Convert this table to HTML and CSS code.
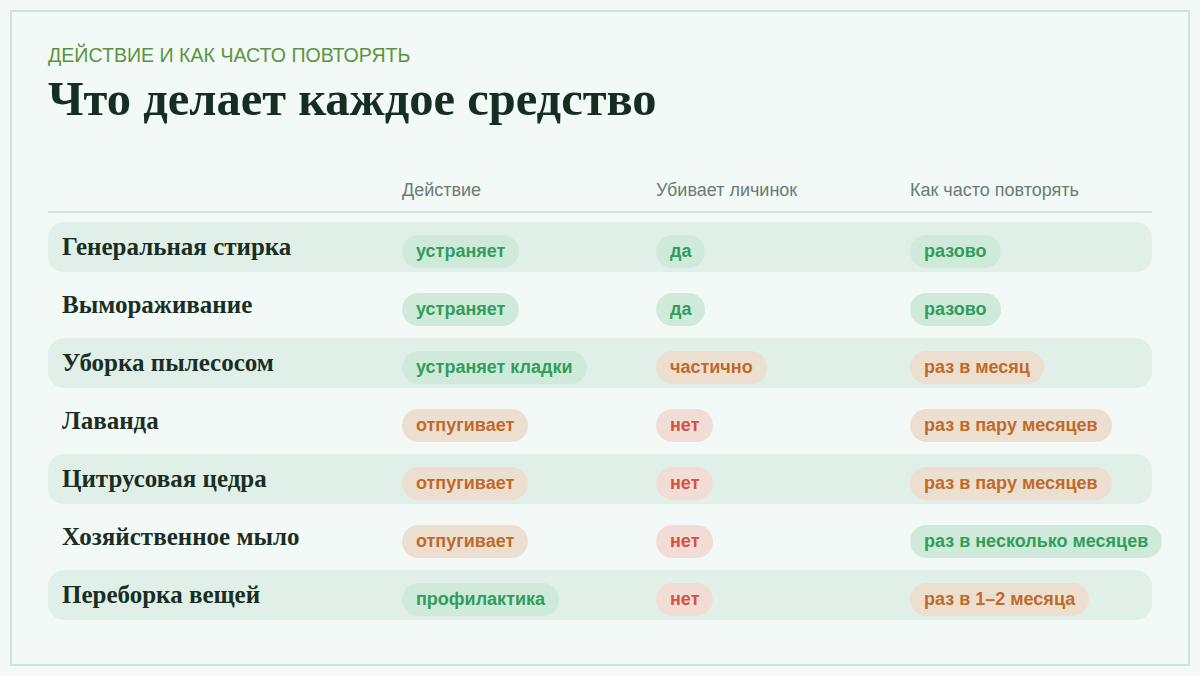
FILE: index.html
```html
<!DOCTYPE html>
<html lang="ru">
<head>
<meta charset="utf-8">
<link rel="stylesheet" href="styles.css">
</head>
<body>
<div class="frame">
  <div class="eyebrow">ДЕЙСТВИЕ И КАК ЧАСТО ПОВТОРЯТЬ</div>
  <h1 class="title">Что делает каждое средство</h1>
  <div class="table">
    <div class="row head">
      <div></div>
      <div class="th">Действие</div>
      <div class="th">Убивает личинок</div>
      <div class="th">Как часто повторять</div>
    </div>
    <div class="row alt">
      <div class="name">Генеральная стирка</div>
      <div><span class="pill g">устраняет</span></div>
      <div><span class="pill g">да</span></div>
      <div><span class="pill g">разово</span></div>
    </div>
    <div class="row">
      <div class="name">Вымораживание</div>
      <div><span class="pill g">устраняет</span></div>
      <div><span class="pill g">да</span></div>
      <div><span class="pill g">разово</span></div>
    </div>
    <div class="row alt">
      <div class="name">Уборка пылесосом</div>
      <div><span class="pill g">устраняет кладки</span></div>
      <div><span class="pill o">частично</span></div>
      <div><span class="pill o">раз в месяц</span></div>
    </div>
    <div class="row">
      <div class="name">Лаванда</div>
      <div><span class="pill o">отпугивает</span></div>
      <div><span class="pill r">нет</span></div>
      <div><span class="pill o">раз в пару месяцев</span></div>
    </div>
    <div class="row alt">
      <div class="name">Цитрусовая цедра</div>
      <div><span class="pill o">отпугивает</span></div>
      <div><span class="pill r">нет</span></div>
      <div><span class="pill o">раз в пару месяцев</span></div>
    </div>
    <div class="row">
      <div class="name">Хозяйственное мыло</div>
      <div><span class="pill o">отпугивает</span></div>
      <div><span class="pill r">нет</span></div>
      <div><span class="pill g">раз в несколько месяцев</span></div>
    </div>
    <div class="row alt">
      <div class="name">Переборка вещей</div>
      <div><span class="pill g">профилактика</span></div>
      <div><span class="pill r">нет</span></div>
      <div><span class="pill o">раз в 1–2 месяца</span></div>
    </div>
  </div>
</div>
</body>
</html>
```

FILE: styles.css
```css
* { box-sizing: border-box; }
html, body { margin: 0; padding: 0; }
body {
  background: #f2f9f6;
  padding: 10px;
  width: 1200px;
  height: 676px;
  font-family: "Liberation Sans", Arial, sans-serif;
}
.frame {
  border: 2px solid #cfe5dc;
  height: 656px;
  padding: 31px 36px 0 36px;
}
.eyebrow {
  color: #5a9442;
  font-size: 19.6px;
  line-height: 24px;
}
.title {
  margin: 4px 0 0 0;
  font-family: "Liberation Serif", "Times New Roman", serif;
  font-weight: 700;
  font-size: 48.5px;
  line-height: 56px;
  color: #142e22;
}
.table {
  margin-top: 52px;
  display: flex;
  flex-direction: column;
  gap: 8px;
}
.row {
  display: grid;
  grid-template-columns: 340px 254px 254px 1fr;
  align-items: center;
  height: 50px;
  padding-left: 14px;
  border-radius: 16px;
}
.row.head {
  height: auto;
  padding-bottom: 10px;
  border-bottom: 2px solid #cfe5dc;
  border-radius: 0;
  margin-bottom: 1px;
}
.th {
  color: #6a7c74;
  font-size: 18px;
  line-height: 22px;
}
.row.alt { background: #e0f0e8; }
.name {
  font-family: "Liberation Serif", "Times New Roman", serif;
  font-weight: 700;
  font-size: 25px;
  color: #1a2e24;
}
.pill {
  display: inline-block;
  white-space: nowrap;
  height: 33px;
  line-height: 33px;
  padding: 0 14px;
  border-radius: 17px;
  font-weight: 700;
  font-size: 18px;
  margin-top: 8px;
}
.pill.g { background: #cfeadb; color: #2f9e5a; }
.pill.o { background: #ecdfd0; color: #bf6a2b; }
.pill.r { background: #f2ddd6; color: #d2533f; }
```
